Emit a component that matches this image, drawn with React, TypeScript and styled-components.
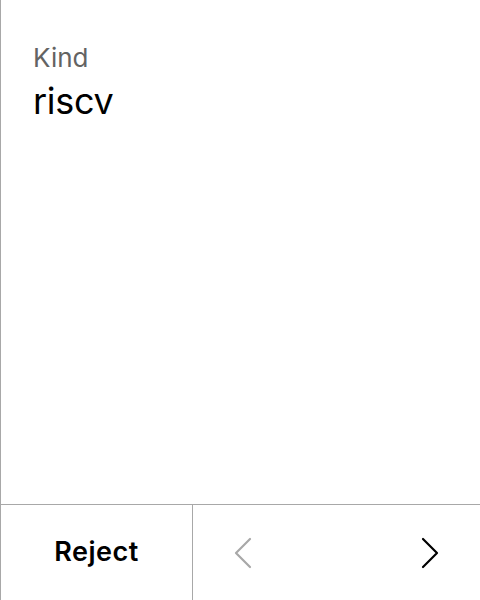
import React from "react";
import styled, { createGlobalStyle } from "styled-components";

const Global = createGlobalStyle`
  html, body { margin: 0; padding: 0; background: #fff; }
  body { font-family: Inter, "Noto Sans", sans-serif; }
`;

const Screen = styled.div`
  width: 480px;
  height: 600px;
  box-sizing: border-box;
  border-left: 1px solid #a8a8a8;
  display: flex;
  flex-direction: column;
`;

const Content = styled.div`
  flex: 1;
  padding: 42px 0 0 32px;
  display: flex;
  flex-direction: column;
`;

const Label = styled.div`
  font-size: 26px;
  line-height: 32px;
  color: #636363;
`;

const Value = styled.div`
  font-size: 36px;
  line-height: 54px;
  color: #000;
  letter-spacing: -0.3px;
`;

const Footer = styled.div`
  height: 96px;
  box-sizing: border-box;
  border-top: 1px solid #a8a8a8;
  display: flex;
`;

const RejectButton = styled.button`
  width: 192px;
  border: none;
  border-right: 1px solid #a8a8a8;
  background: none;
  font-family: inherit;
  font-size: 27px;
  font-weight: 600;
  letter-spacing: 0.5px;
  color: #000;
  padding: 0 0 2px 0;
`;

const Nav = styled.div`
  flex: 1;
  display: flex;
  align-items: center;
  justify-content: space-between;
  padding: 0 41px 0 41px;
`;

const NavButton = styled.button<{ $disabled?: boolean }>`
  border: none;
  background: none;
  padding: 0;
  display: flex;
  color: ${(p) => (p.$disabled ? "#a8a8a8" : "#000")};
`;

const Chevron = ({ dir }: { dir: "left" | "right" }) => (
  <svg width="18" height="32" viewBox="0 0 18 32" fill="none">
    <path
      d={dir === "left" ? "M16 2 L2 16 L16 30" : "M2 2 L16 16 L2 30"}
      stroke="currentColor"
      strokeWidth="2.2"
      strokeLinecap="round"
      strokeLinejoin="round"
    />
  </svg>
);

export default function App() {
  return (
    <>
      <Global />
      <Screen>
        <Content>
          <Label>Kind</Label>
          <Value>riscv</Value>
        </Content>
        <Footer>
          <RejectButton>Reject</RejectButton>
          <Nav>
            <NavButton $disabled>
              <Chevron dir="left" />
            </NavButton>
            <NavButton>
              <Chevron dir="right" />
            </NavButton>
          </Nav>
        </Footer>
      </Screen>
    </>
  );
}
